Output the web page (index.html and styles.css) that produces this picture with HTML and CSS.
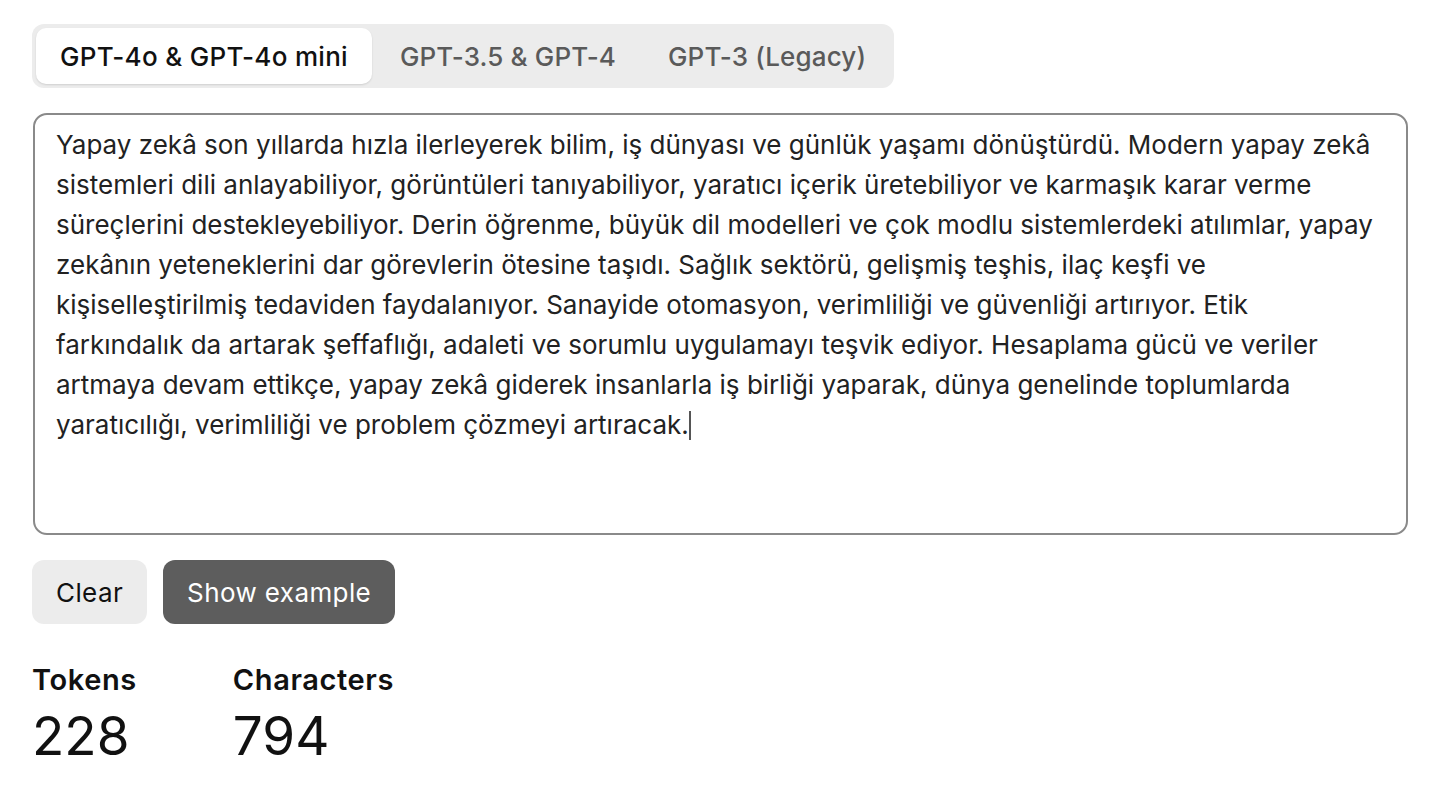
FILE: index.html
```html
<!DOCTYPE html>
<html lang="tr">
<head>
<meta charset="utf-8">
<title>Tokenizer</title>
<link rel="stylesheet" href="styles.css">
</head>
<body>
<main class="page">
  <div class="tabs">
    <button class="tab active">GPT-4o &amp; GPT-4o mini</button>
    <button class="tab">GPT-3.5 &amp; GPT-4</button>
    <button class="tab">GPT-3 (Legacy)</button>
  </div>
  <div class="editor">
    <div class="line">Yapay zekâ son yıllarda hızla ilerleyerek bilim, iş dünyası ve günlük yaşamı dönüştürdü. Modern yapay zekâ</div>
    <div class="line">sistemleri dili anlayabiliyor, görüntüleri tanıyabiliyor, yaratıcı içerik üretebiliyor ve karmaşık karar verme</div>
    <div class="line">süreçlerini destekleyebiliyor. Derin öğrenme, büyük dil modelleri ve çok modlu sistemlerdeki atılımlar, yapay</div>
    <div class="line">zekânın yeteneklerini dar görevlerin ötesine taşıdı. Sağlık sektörü, gelişmiş teşhis, ilaç keşfi ve</div>
    <div class="line">kişiselleştirilmiş tedaviden faydalanıyor. Sanayide otomasyon, verimliliği ve güvenliği artırıyor. Etik</div>
    <div class="line">farkındalık da artarak şeffaflığı, adaleti ve sorumlu uygulamayı teşvik ediyor. Hesaplama gücü ve veriler</div>
    <div class="line">artmaya devam ettikçe, yapay zekâ giderek insanlarla iş birliği yaparak, dünya genelinde toplumlarda</div>
    <div class="line">yaratıcılığı, verimliliği ve problem çözmeyi artıracak.<span class="caret"></span></div>
  </div>
  <div class="actions">
    <button class="btn btn-light">Clear</button>
    <button class="btn btn-dark">Show example</button>
  </div>
  <div class="stats">
    <div class="stat">
      <div class="stat-label">Tokens</div>
      <div class="stat-value">228</div>
    </div>
    <div class="stat">
      <div class="stat-label">Characters</div>
      <div class="stat-value">794</div>
    </div>
  </div>
</main>
</body>
</html>
```

FILE: styles.css
```css
* { box-sizing: border-box; }
html, body { margin: 0; padding: 0; background: #fff; }
body {
  font-family: Inter, "Noto Sans", "Liberation Sans", sans-serif;
  color: #1f1f1f;
}
.page {
  padding: 24px 26px 0 32px;
}
.tabs {
  display: inline-flex;
  gap: 4px;
  padding: 4px;
  background: #ececec;
  border-radius: 12px;
}
.tab {
  font-family: inherit;
  font-size: 26px;
  font-weight: 500;
  letter-spacing: 0.3px;
  height: 56px;
  padding: 0 24px;
  border: 0;
  border-radius: 10px;
  background: transparent;
  color: #5a5a5a;
  cursor: pointer;
}
.tab + .tab { letter-spacing: 0.15px; }
.tab.active {
  background: #fff;
  color: #111;
  box-shadow: 0 1px 2px rgba(0,0,0,0.12);
}
.editor {
  margin-top: 25px;
  margin-left: 1px;
  height: 422px;
  border: 2px solid #8a8a8a;
  border-radius: 14px;
  padding: 10px 21px;
  font-size: 26px;
  line-height: 40px;
  color: #222;
}
.line { white-space: nowrap; }
.caret {
  display: inline-block;
  width: 2px;
  height: 29px;
  background: #555;
  vertical-align: -6px;
}
.actions {
  display: flex;
  gap: 16px;
  margin-top: 25px;
}
.btn {
  font-family: inherit;
  font-size: 26px;
  letter-spacing: 0.4px;
  height: 64px;
  padding: 0 24px;
  border: 0;
  border-radius: 12px;
}
.btn-light { background: #ececec; color: #111; }
.btn-dark { background: #5d5d5d; color: #fff; }
.stats {
  display: flex;
  gap: 96px;
  margin-top: 38px;
}
.stat-label {
  font-size: 29px;
  font-weight: 600;
  letter-spacing: 0.6px;
  color: #111;
  line-height: 36px;
}
.stat-value {
  font-size: 53px;
  line-height: 76px;
  color: #111;
}
```
